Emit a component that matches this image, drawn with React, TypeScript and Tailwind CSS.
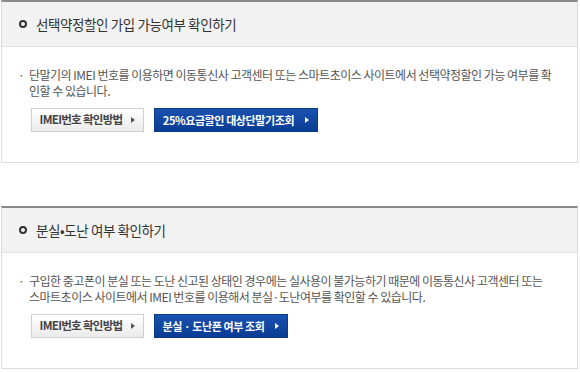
const font = "font-['Malgun_Gothic','Noto_Sans_CJK_KR',sans-serif]";

const Arrow = ({ className }: { className: string }) => (
  <svg width="4" height="6" viewBox="0 0 4 6" className={className}>
    <path d="M0 0 L4 3 L0 6 Z" fill="currentColor" />
  </svg>
);

const GrayButton = ({ label }: { label: string }) => (
  <button className="flex h-[24px] w-[113px] items-center justify-center gap-[9px] border border-[#cfcfcf] bg-gradient-to-b from-white to-[#ebebeb] text-[11.5px] font-bold tracking-[-0.7px] text-[#444]">
    <span>{label}</span>
    <Arrow className="text-[#555]" />
  </button>
);

const BlueButton = ({ label, width }: { label: string; width: string }) => (
  <button
    className={`flex h-[24px] ${width} items-center justify-center gap-[11px] border border-[#0b3a87] bg-gradient-to-b from-[#1a52b0] to-[#0a3c94] text-[11px] font-bold tracking-[-0.4px] text-white`}
  >
    <span>{label}</span>
    <Arrow className="text-white" />
  </button>
);

const Card = ({
  title,
  lines,
  blue,
  blueWidth,
}: {
  title: string;
  lines: string[];
  blue: string;
  blueWidth: string;
}) => (
  <section className="ml-[1px] w-[577px] border-x border-b border-t-2 border-x-[#dcdcdc] border-b-[#dcdcdc] border-t-[#8a8a8a] bg-white">
    <div className="flex h-[45px] items-center gap-[9px] border-b border-[#e2e2e2] bg-[#f2f2f2] pl-[17px]">
      <span className="h-[8px] w-[8px] rounded-full border-[2.5px] border-[#333]" />
      <h2 className="text-[13.5px] tracking-[-0.4px] text-[#333]">{title}</h2>
    </div>
    <div className="pb-[30px] pl-[16px] pt-[20px]">
      <div className="flex text-[12px] leading-[16px] tracking-[-0.5px] text-[#555]">
        <span className="w-[11px]">·</span>
        <p>
          {lines[0]}
          <br />
          {lines[1]}
        </p>
      </div>
      <div className="ml-[13px] mt-[9px] flex gap-[10px]">
        <GrayButton label="IMEI번호 확인방법" />
        <BlueButton label={blue} width={blueWidth} />
      </div>
    </div>
  </section>
);

export default function App() {
  return (
    <div className={`h-[372px] w-[580px] bg-white ${font}`}>
      <Card
        title="선택약정할인 가입 가능여부 확인하기"
        lines={[
          "단말기의 IMEI 번호를 이용하면 이동통신사 고객센터 또는 스마트초이스 사이트에서 선택약정할인 가능 여부를 확",
          "인할 수 있습니다.",
        ]}
        blue="25%요금할인 대상단말기조회"
        blueWidth="w-[164px]"
      />
      <div className="h-[43px]" />
      <Card
        title="분실•도난 여부 확인하기"
        lines={[
          "구입한 중고폰이 분실 또는 도난 신고된 상태인 경우에는 실사용이 불가능하기 때문에 이동통신사 고객센터 또는",
          "스마트초이스 사이트에서 IMEI 번호를 이용해서 분실·도난여부를 확인할 수 있습니다.",
        ]}
        blue="분실 · 도난폰 여부 조회"
        blueWidth="w-[134px]"
      />
    </div>
  );
}
